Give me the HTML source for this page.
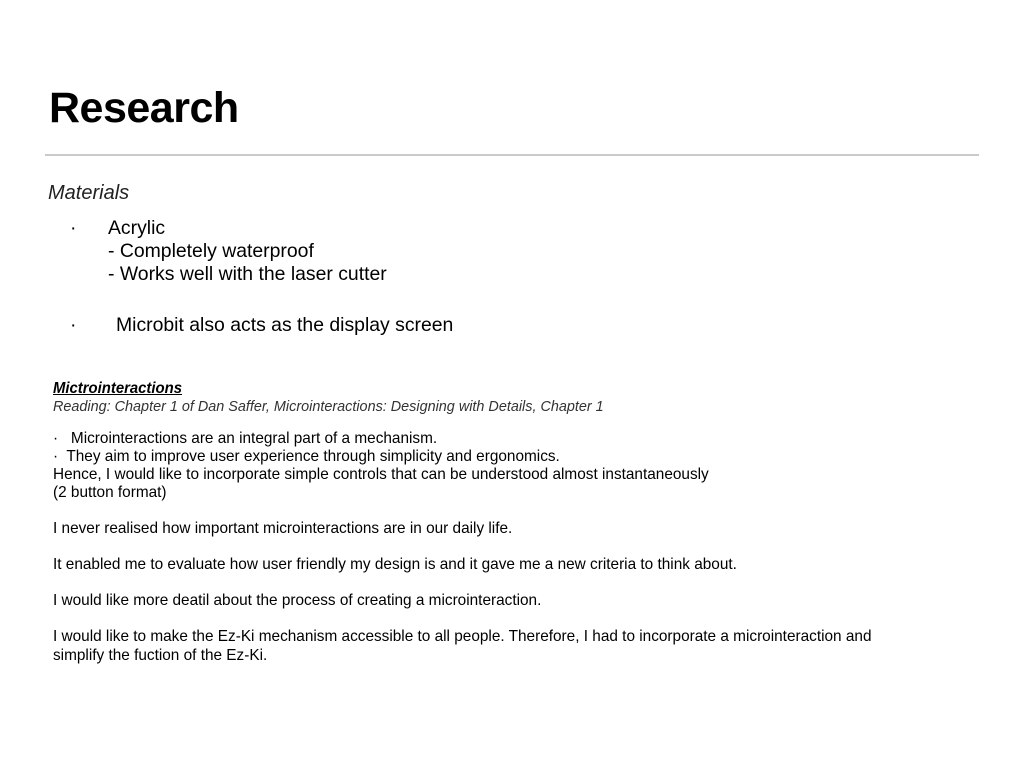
<!DOCTYPE html>
<html><head><meta charset="utf-8"><style>
body{margin:0;width:1024px;height:768px;background:#fff;position:relative;overflow:hidden;font-family:"Liberation Sans",sans-serif;color:#000}
div{position:absolute;white-space:nowrap;line-height:1}
.t{left:49px;top:87px;font-size:43px;font-weight:bold;letter-spacing:-0.5px}
.hr{left:45px;top:154px;width:934px;height:2px;background:#cacaca}
.m{font-size:19.4px}
.s{font-size:16px;transform-origin:0 0;transform:scaleX(0.96)}
</style></head><body>
<div class="t">Research</div>
<div class="hr"></div>
<div class="m" style="left:48px;top:183px;font-style:italic;color:#222;font-size:20px">Materials</div>
<div class="m" style="left:70px;top:219px">·</div>
<div class="m" style="left:108px;top:219px">Acrylic</div>
<div class="m" style="left:108px;top:242px">- Completely waterproof</div>
<div class="m" style="left:108px;top:265px">- Works well with the laser cutter</div>
<div class="m" style="left:70px;top:316px">·</div>
<div class="m" style="left:116px;top:316px">Microbit also acts as the display screen</div>
<div class="s" style="left:53px;top:381px;font-weight:bold;font-style:italic;text-decoration:underline;font-size:15.5px">Mictrointeractions</div>
<div class="s" style="left:53px;top:399px;font-style:italic;color:#333;font-size:15px">Reading: Chapter 1 of Dan Saffer, Microinteractions: Designing with Details, Chapter 1</div>
<div class="s" style="left:53px;top:431px">·&nbsp;&nbsp; Microinteractions are an integral part of a mechanism.</div>
<div class="s" style="left:53px;top:449px">·&nbsp; They aim to improve user experience through simplicity and ergonomics.</div>
<div class="s" style="left:53px;top:467px">Hence, I would like to incorporate simple controls that can be understood almost instantaneously</div>
<div class="s" style="left:53px;top:485px">(2 button format)</div>
<div class="s" style="left:53px;top:521px">I never realised how important microinteractions are in our daily life.</div>
<div class="s" style="left:53px;top:557px">It enabled me to evaluate how user friendly my design is and it gave me a new criteria to think about.</div>
<div class="s" style="left:53px;top:593px">I would like more deatil about the process of creating a microinteraction.</div>
<div class="s" style="left:53px;top:629px">I would like to make the Ez-Ki mechanism accessible to all people. Therefore, I had to incorporate a microinteraction and</div>
<div class="s" style="left:53px;top:648px">simplify the fuction of the Ez-Ki.</div>
</body></html>
